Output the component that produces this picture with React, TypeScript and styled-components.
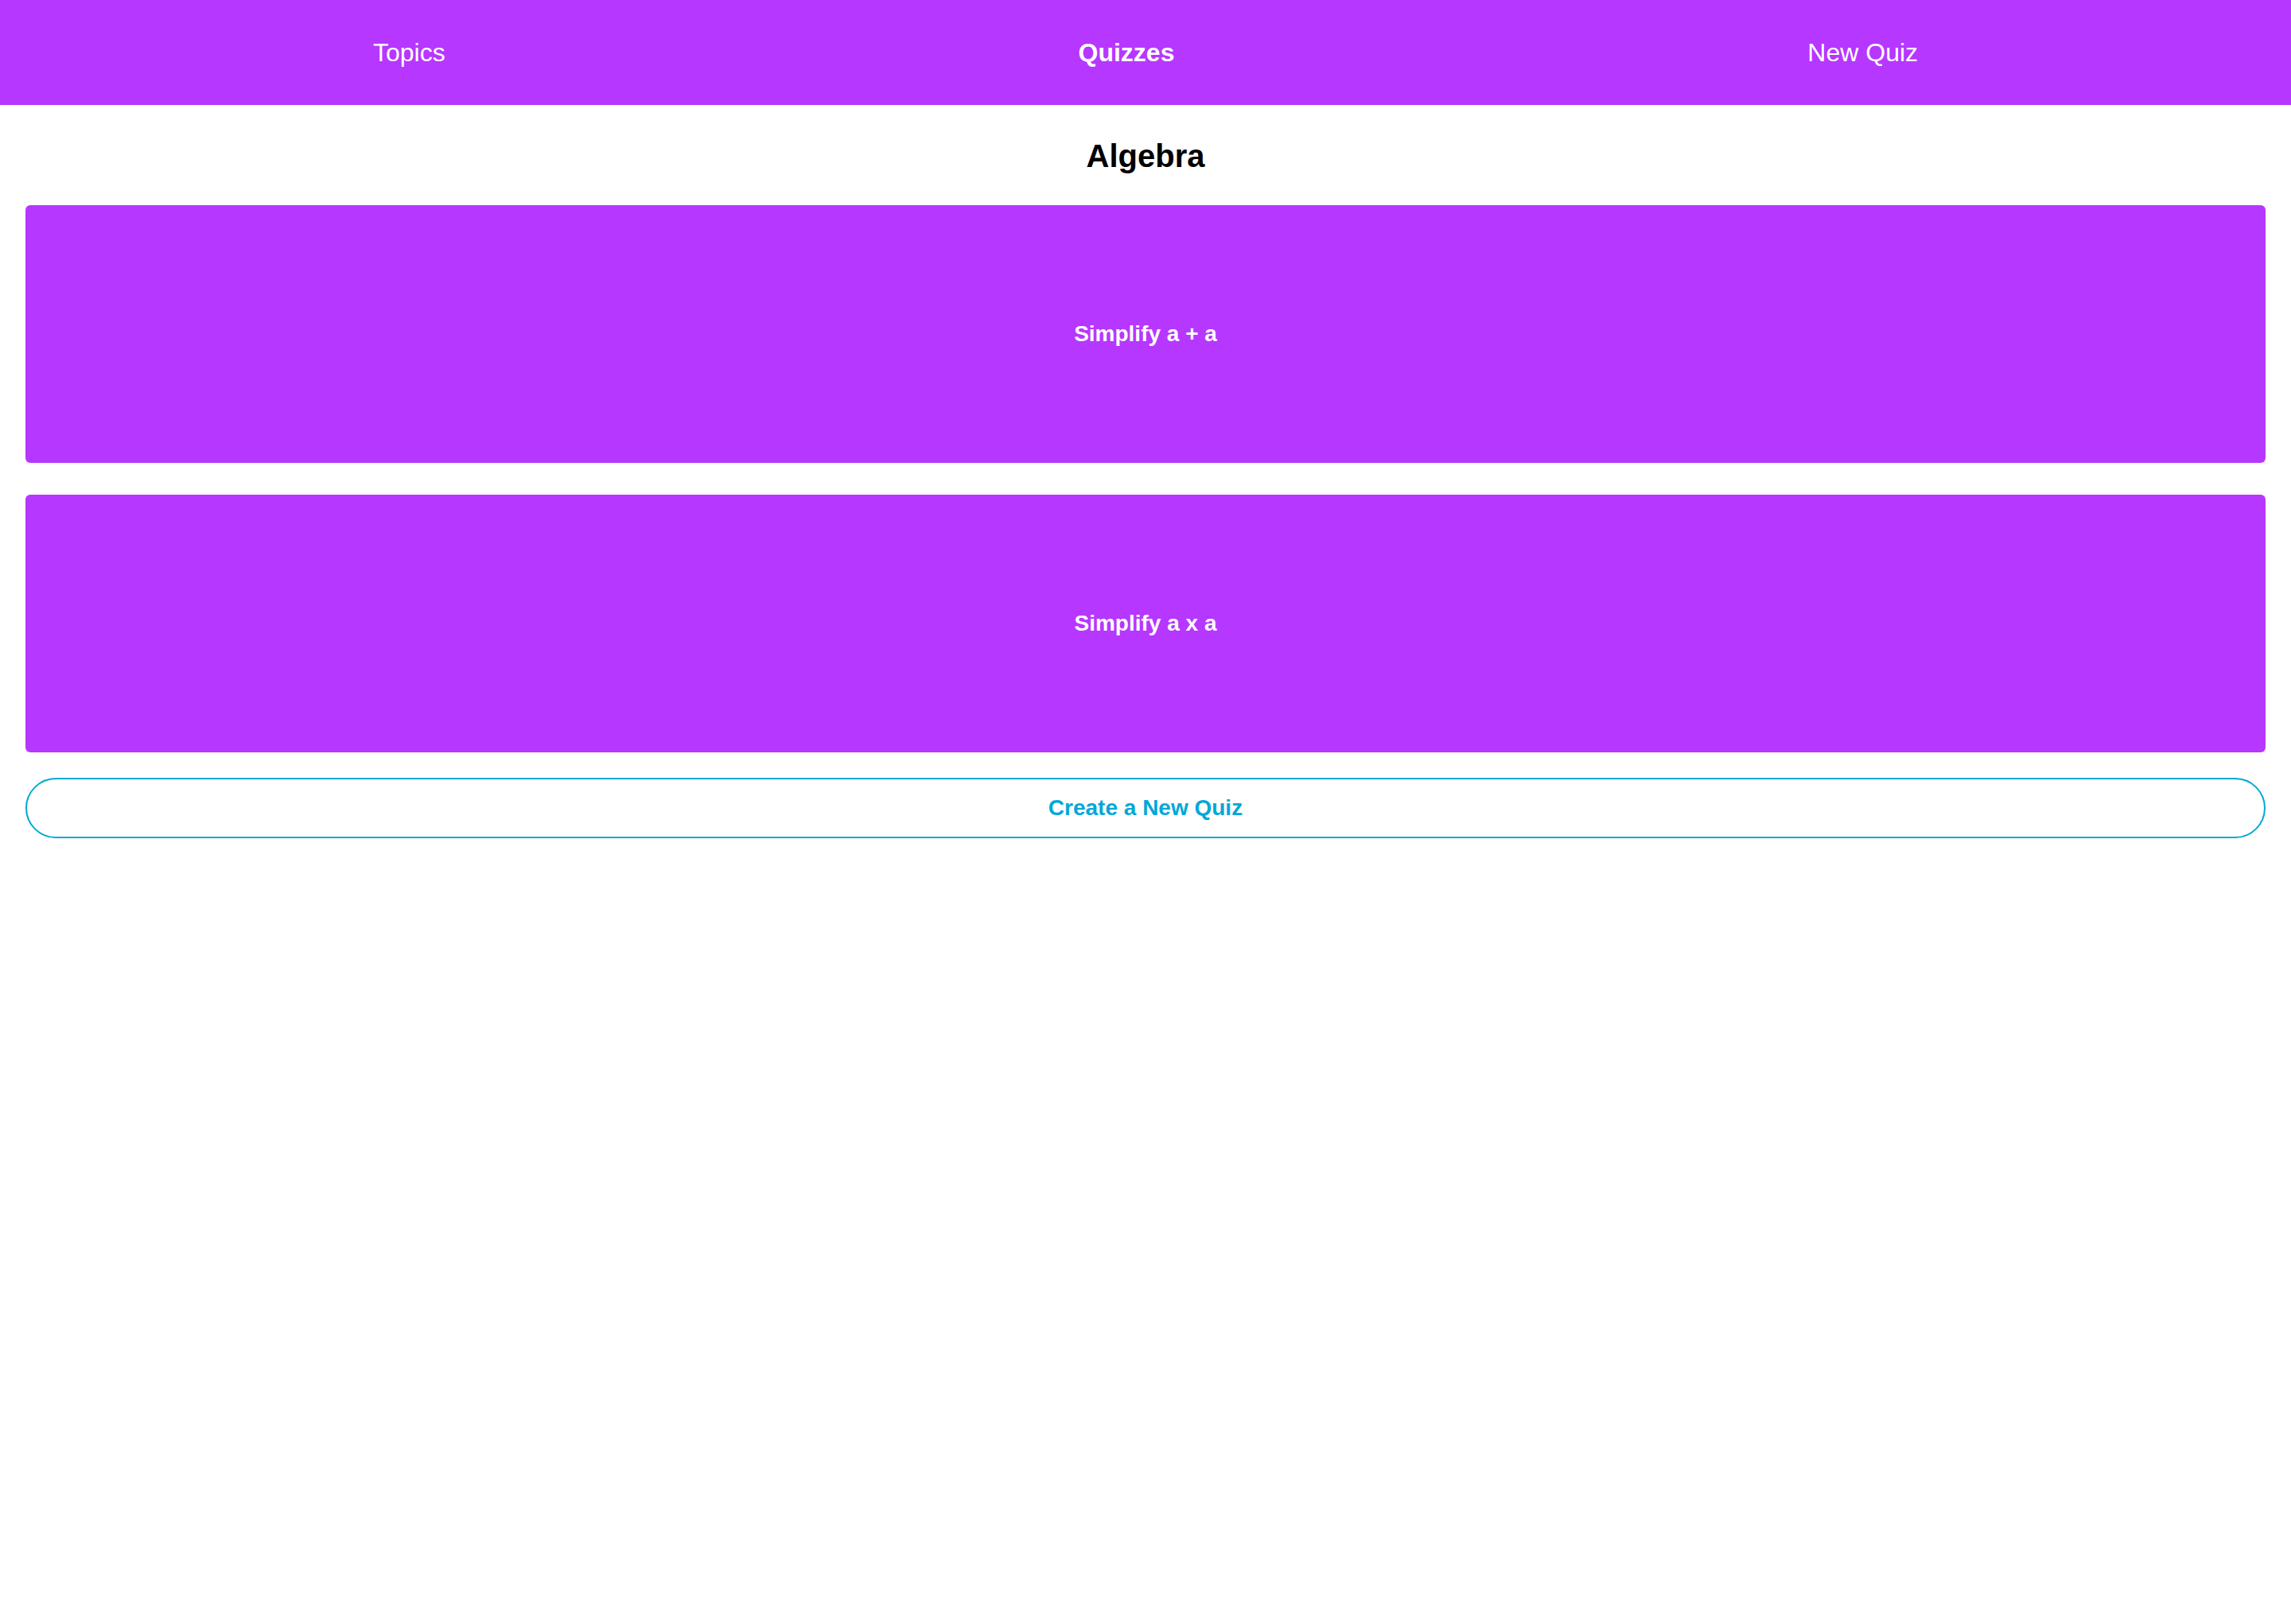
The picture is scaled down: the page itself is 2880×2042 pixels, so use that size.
import React from "react";
import styled, { createGlobalStyle } from "styled-components";

const GlobalStyle = createGlobalStyle`
  html, body {
    margin: 0;
    padding: 0;
    background: #ffffff;
    font-family: "Liberation Sans", Arial, Helvetica, sans-serif;
  }
  * { box-sizing: border-box; }
`;

const PURPLE = "#b637ff";
const CYAN = "#00a8d6";

const NavBar = styled.nav`
  height: 132px;
  background: ${PURPLE};
  display: flex;
  align-items: center;
  justify-content: space-around;
  padding: 0 71px;
`;

const NavLink = styled.a<{ $active?: boolean }>`
  color: #ffffff;
  font-size: 32px;
  font-weight: ${(p) => (p.$active ? 700 : 400)};
  text-decoration: none;
  line-height: 1;
  cursor: pointer;
`;

const Main = styled.main`
  padding: 41px 32px 40px;
  display: flex;
  flex-direction: column;
`;

const Heading = styled.h2`
  margin: 0 0 39px;
  font-size: 40px;
  line-height: 46px;
  font-weight: 700;
  color: #000000;
  text-align: center;
`;

const QuizList = styled.ul`
  list-style: none;
  margin: 0 0 32px;
  padding: 0;
  display: flex;
  flex-direction: column;
  gap: 40px;
`;

const QuizCard = styled.li`
  height: 324px;
  background: ${PURPLE};
  border-radius: 6px;
  display: flex;
  align-items: center;
  justify-content: center;
  color: #ffffff;
  font-size: 28px;
  font-weight: 700;
  cursor: pointer;
`;

const CreateButton = styled.button`
  height: 76px;
  width: 100%;
  border: 2px solid ${CYAN};
  border-radius: 38px;
  background: #ffffff;
  color: ${CYAN};
  font-family: "Liberation Sans", Arial, Helvetica, sans-serif;
  font-size: 28px;
  font-weight: 700;
  display: flex;
  align-items: center;
  justify-content: center;
  cursor: pointer;
`;

const quizzes = ["Simplify a + a", "Simplify a x a"];

export default function App() {
  return (
    <>
      <GlobalStyle />
      <NavBar>
        <NavLink>Topics</NavLink>
        <NavLink $active>Quizzes</NavLink>
        <NavLink>New Quiz</NavLink>
      </NavBar>
      <Main>
        <Heading>Algebra</Heading>
        <QuizList>
          {quizzes.map((q) => (
            <QuizCard key={q}>{q}</QuizCard>
          ))}
        </QuizList>
        <CreateButton>Create a New Quiz</CreateButton>
      </Main>
    </>
  );
}
